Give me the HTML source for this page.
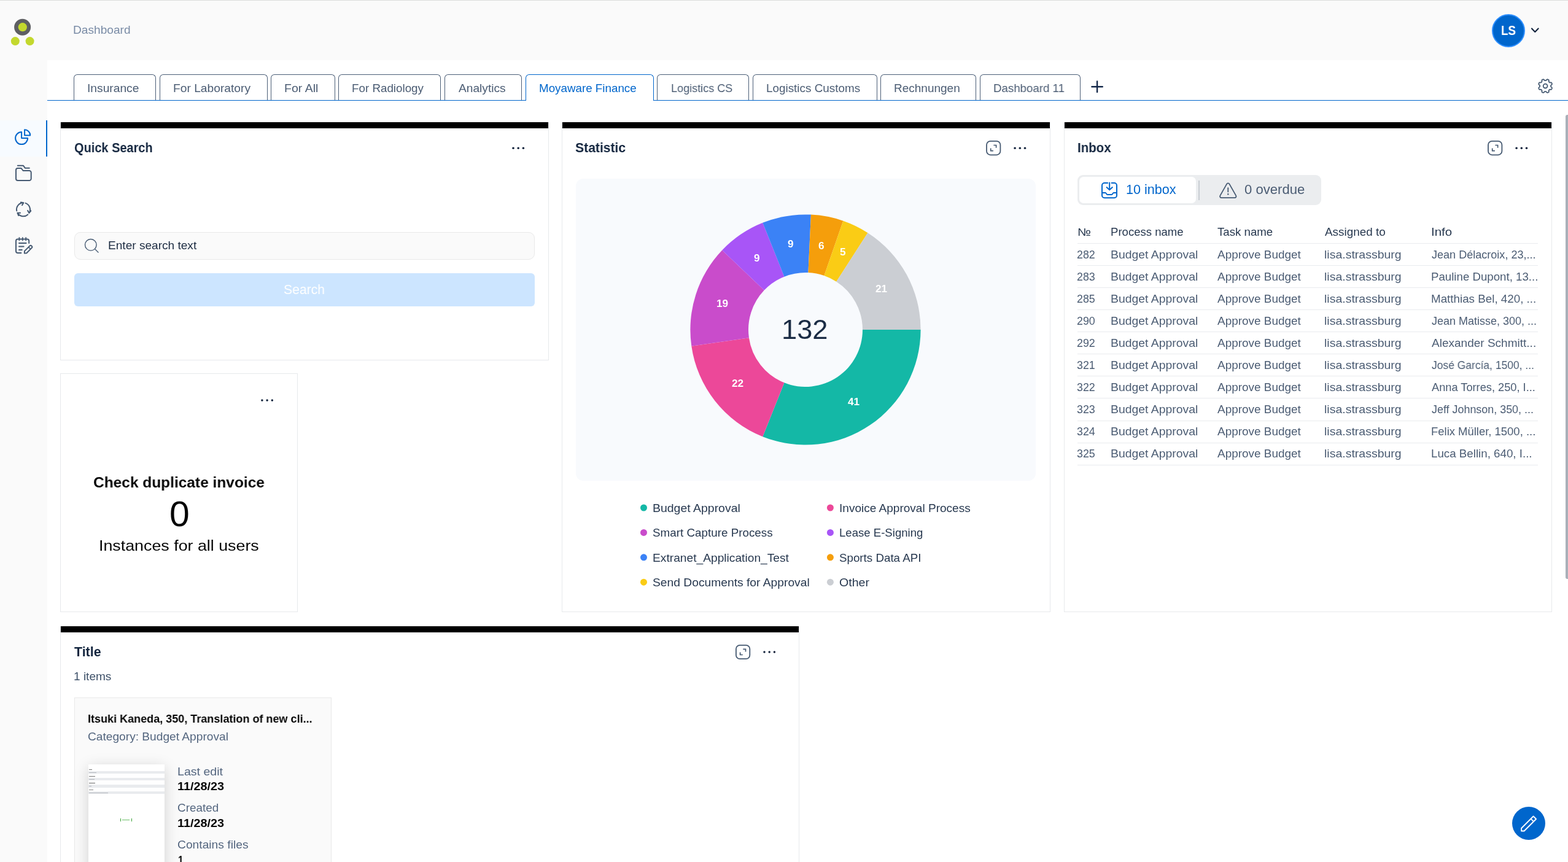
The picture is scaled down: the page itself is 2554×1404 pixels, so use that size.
<!DOCTYPE html>
<html lang="en">
<head>
<meta charset="utf-8">
<title>Dashboard</title>
<style>
*{box-sizing:border-box}
html,body{margin:0;padding:0}
body{background:#fff;font-family:"Liberation Sans",Arial,sans-serif}
.page{position:relative;width:2554px;height:1404px;overflow:hidden;background:#fff}
.a{position:absolute}
.t{position:absolute;white-space:nowrap;line-height:1;transform-origin:0 0;will-change:transform}
svg{position:absolute;overflow:visible}
</style>
</head>
<body>
<div class="page">
<div class="a" style="left:0px;top:0px;width:2554px;height:98px;background:#fafafa"></div>
<div class="a" style="left:0px;top:0px;width:77px;height:1404px;background:#fafafa"></div>
<div class="a" style="left:0px;top:0px;width:2554px;height:1px;background:#dadcda"></div>
<div class="a" style="left:0px;top:196px;width:77px;height:59px;background:#f7fbff;border-right:2px solid #0066cc"></div>
<svg style="left:14px;top:28px" width="48" height="50" viewBox="14 28 48 50" fill="none" ><circle cx="36.6" cy="44.2" r="13.5" fill="#5e5f62"/><circle cx="36.8" cy="44.2" r="7.1" fill="#c3d82e"/><circle cx="24.8" cy="67.1" r="7" fill="#c3d82e"/><circle cx="48.6" cy="67.1" r="7" fill="#c3d82e"/></svg>
<svg style="left:20px;top:205px" width="36" height="36" viewBox="20 205 36 36" fill="none" ><path d="M35.1 215.1A10 10 0 1 0 45.1 225.1H35.1Z" stroke="#0066cc" stroke-width="2" stroke-linejoin="round"/><path d="M40.1 211.3A9.1 9.1 0 0 1 49.2 220.4H40.1Z" stroke="#0066cc" stroke-width="2" stroke-linejoin="round"/></svg>
<svg style="left:20px;top:264px" width="36" height="36" viewBox="20 264 36 36" fill="none" ><path d="M29 274H34.6L37.6 278H47.7A3 3 0 0 1 50.7 281V291A3 3 0 0 1 47.7 294H29A3 3 0 0 1 26 291V277A3 3 0 0 1 29 274Z" stroke="#465a72" stroke-width="2" stroke-linejoin="round"/><path d="M28.8 269.8H38L41 273.8H47.8" stroke="#465a72" stroke-width="2" stroke-linecap="round" stroke-linejoin="round"/></svg>
<svg style="left:20px;top:323px" width="36" height="36" viewBox="20 323 36 36" fill="none" ><path d="M27.20 343.40A11 11 0 0 1 38.38 330.31M38.38 330.31L33.85 329.51M38.38 330.31L36.01 334.25M41.58 330.90A11 11 0 0 1 47.43 346.97M47.43 346.97L50.32 343.39M47.43 346.97L45.13 342.98M45.36 349.47A11 11 0 0 1 28.47 346.80M28.47 346.80L30.20 351.07M28.47 346.80L33.07 346.72" stroke="#465a72" stroke-width="2" stroke-linecap="round" stroke-linejoin="round"/></svg>
<svg style="left:20px;top:382px" width="36" height="36" viewBox="20 382 36 36" fill="none" ><path d="M47.2 396V392.4A3 3 0 0 0 44.2 389.4H29A3 3 0 0 0 26 392.4V409A3 3 0 0 0 29 412H34.4" stroke="#465a72" stroke-width="2" stroke-linecap="round" stroke-linejoin="round"/><path d="M31.4 387.3V391.3M36.8 387.3V391.3M42.2 387.3V391.3M31 395.9H42.6M31 401.4H38.6M31 406.9H35.8" stroke="#465a72" stroke-width="2" stroke-linecap="round"/><path d="M40 408.9L48.3 400.6A2.3 2.3 0 0 1 51.6 403.9L43.3 412.2L39.8 412.5Z" stroke="#465a72" stroke-width="2" stroke-linejoin="round"/><path d="M46.4 402.4L49.7 405.7" stroke="#465a72" stroke-width="1.6"/></svg>
<div class="a" style="left:2430px;top:23px;width:54px;height:54px;border-radius:50%;background:#0066cc;border:2px solid #2e8fff"></div>
<svg style="left:2490px;top:40px" width="22" height="20" viewBox="2490 40 22 20" fill="none" ><path d="M2495 46.4L2500.3 51.9L2505.6 46.4" stroke="#13233c" stroke-width="2.1" stroke-linecap="round" stroke-linejoin="round"/></svg>
<div class="a" style="left:77px;top:163px;width:2477px;height:1px;background:#0066cc"></div>
<div class="a" style="left:120px;top:121px;width:134px;height:42px;border:1px solid #4b5e77;border-bottom:0;border-radius:6px 6px 0 0"></div>
<div class="a" style="left:260px;top:121px;width:176px;height:42px;border:1px solid #4b5e77;border-bottom:0;border-radius:6px 6px 0 0"></div>
<div class="a" style="left:441px;top:121px;width:105px;height:42px;border:1px solid #4b5e77;border-bottom:0;border-radius:6px 6px 0 0"></div>
<div class="a" style="left:551px;top:121px;width:167px;height:42px;border:1px solid #4b5e77;border-bottom:0;border-radius:6px 6px 0 0"></div>
<div class="a" style="left:724px;top:121px;width:126px;height:42px;border:1px solid #4b5e77;border-bottom:0;border-radius:6px 6px 0 0"></div>
<div class="a" style="left:856px;top:121px;width:209px;height:43px;border:1px solid #0066cc;border-bottom:0;border-radius:6px 6px 0 0;background:#fff"></div>
<div class="a" style="left:1070px;top:121px;width:150px;height:42px;border:1px solid #4b5e77;border-bottom:0;border-radius:6px 6px 0 0"></div>
<div class="a" style="left:1226px;top:121px;width:203px;height:42px;border:1px solid #4b5e77;border-bottom:0;border-radius:6px 6px 0 0"></div>
<div class="a" style="left:1434px;top:121px;width:156px;height:42px;border:1px solid #4b5e77;border-bottom:0;border-radius:6px 6px 0 0"></div>
<div class="a" style="left:1596px;top:121px;width:164px;height:42px;border:1px solid #4b5e77;border-bottom:0;border-radius:6px 6px 0 0"></div>
<svg style="left:1775px;top:129px" width="24" height="24" viewBox="1775 129 24 24" fill="none" ><path d="M1778.4 141.2H1795.8M1787.1 132.5V149.9" stroke="#15294a" stroke-width="2.4" stroke-linecap="round"/></svg>
<svg style="left:2503px;top:126px" width="28" height="28" viewBox="2503 126 28 28" fill="none" ><path d="M2526.10 140.10L2526.10 140.45L2526.11 140.81L2526.18 141.17L2526.46 141.58L2527.10 142.09L2527.73 142.65L2527.93 143.16L2527.91 143.61L2527.79 144.04L2527.63 144.46L2527.45 144.87L2527.22 145.26L2526.92 145.60L2526.42 145.81L2525.58 145.77L2524.76 145.67L2524.28 145.76L2523.97 145.97L2523.71 146.21L2523.46 146.46L2523.21 146.71L2522.97 146.97L2522.76 147.28L2522.67 147.76L2522.77 148.58L2522.81 149.42L2522.60 149.92L2522.26 150.22L2521.87 150.45L2521.46 150.63L2521.04 150.79L2520.61 150.91L2520.16 150.93L2519.65 150.73L2519.09 150.10L2518.58 149.46L2518.17 149.18L2517.81 149.11L2517.45 149.10L2517.10 149.10L2516.75 149.10L2516.39 149.11L2516.03 149.18L2515.62 149.46L2515.11 150.10L2514.55 150.73L2514.04 150.93L2513.59 150.91L2513.16 150.79L2512.74 150.63L2512.33 150.45L2511.94 150.22L2511.60 149.92L2511.39 149.42L2511.43 148.58L2511.53 147.76L2511.44 147.28L2511.23 146.97L2510.99 146.71L2510.74 146.46L2510.49 146.21L2510.23 145.97L2509.92 145.76L2509.44 145.67L2508.62 145.77L2507.78 145.81L2507.28 145.60L2506.98 145.26L2506.75 144.87L2506.57 144.46L2506.41 144.04L2506.29 143.61L2506.27 143.16L2506.47 142.65L2507.10 142.09L2507.74 141.58L2508.02 141.17L2508.09 140.81L2508.10 140.45L2508.10 140.10L2508.10 139.75L2508.09 139.39L2508.02 139.03L2507.74 138.62L2507.10 138.11L2506.47 137.55L2506.27 137.04L2506.29 136.59L2506.41 136.16L2506.57 135.74L2506.75 135.33L2506.98 134.94L2507.28 134.60L2507.78 134.39L2508.62 134.43L2509.44 134.53L2509.92 134.44L2510.23 134.23L2510.49 133.99L2510.74 133.74L2510.99 133.49L2511.23 133.23L2511.44 132.92L2511.53 132.44L2511.43 131.62L2511.39 130.78L2511.60 130.28L2511.94 129.98L2512.33 129.75L2512.74 129.57L2513.16 129.41L2513.59 129.29L2514.04 129.27L2514.55 129.47L2515.11 130.10L2515.62 130.74L2516.03 131.02L2516.39 131.09L2516.75 131.10L2517.10 131.10L2517.45 131.10L2517.81 131.09L2518.17 131.02L2518.58 130.74L2519.09 130.10L2519.65 129.47L2520.16 129.27L2520.61 129.29L2521.04 129.41L2521.46 129.57L2521.87 129.75L2522.26 129.98L2522.60 130.28L2522.81 130.78L2522.77 131.62L2522.67 132.44L2522.76 132.92L2522.97 133.23L2523.21 133.49L2523.46 133.74L2523.71 133.99L2523.97 134.23L2524.28 134.44L2524.76 134.53L2525.58 134.43L2526.42 134.39L2526.92 134.60L2527.22 134.94L2527.45 135.33L2527.63 135.74L2527.79 136.16L2527.91 136.59L2527.93 137.04L2527.73 137.55L2527.10 138.11L2526.46 138.62L2526.18 139.03L2526.11 139.39L2526.10 139.75Z" stroke="#465a72" stroke-width="1.8" stroke-linejoin="round"/><circle cx="2517.1" cy="140.1" r="3.4" stroke="#465a72" stroke-width="1.8"/></svg>
<div class="a" style="left:98px;top:199px;width:796px;height:388px;border:1px solid #e7e9ec;background:#fff"></div><div class="a" style="left:99px;top:199px;width:794px;height:10px;background:#000"></div>
<div class="a" style="left:98px;top:608px;width:387px;height:389px;border:1px solid #e7e9ec;background:#fff"></div>
<div class="a" style="left:915px;top:199px;width:796px;height:798px;border:1px solid #e7e9ec;background:#fff"></div><div class="a" style="left:916px;top:199px;width:794px;height:10px;background:#000"></div>
<div class="a" style="left:1733px;top:199px;width:795px;height:798px;border:1px solid #e7e9ec;background:#fff"></div><div class="a" style="left:1734px;top:199px;width:793px;height:10px;background:#000"></div>
<div class="a" style="left:98px;top:1020px;width:1204px;height:400px;border:1px solid #e7e9ec;background:#fff"></div><div class="a" style="left:99px;top:1020px;width:1202px;height:10px;background:#000"></div>
<div class="a" style="left:121px;top:378px;width:750px;height:45px;border:1px solid #e9e9e9;border-radius:10px;background:#fafafa"></div>
<svg style="left:134px;top:385px" width="30" height="30" viewBox="134 385 30 30" fill="none" ><circle cx="147.8" cy="398.8" r="9.3" stroke="#465a72" stroke-width="1.4"/><path d="M154.5 405.5L160 411" stroke="#465a72" stroke-width="1.4" stroke-linecap="round"/></svg>
<div class="a" style="left:121px;top:445px;width:750px;height:54px;border-radius:6px;background:#cce5ff"></div>
<svg style="left:826px;top:231px" width="36" height="20" viewBox="826 231 36 20" fill="none" ><circle cx="836.0" cy="241.2" r="1.75" fill="#13233c"/><circle cx="844.2" cy="241.2" r="1.75" fill="#13233c"/><circle cx="852.4" cy="241.2" r="1.75" fill="#13233c"/></svg>
<svg style="left:417px;top:642px" width="36" height="20" viewBox="417 642 36 20" fill="none" ><circle cx="426.9" cy="652.0" r="1.75" fill="#13233c"/><circle cx="435.1" cy="652.0" r="1.75" fill="#13233c"/><circle cx="443.3" cy="652.0" r="1.75" fill="#13233c"/></svg>
<svg style="left:1600px;top:225px" width="80" height="32" viewBox="1600 225 80 32" fill="none" ><rect x="1607.0" y="229.9" width="22.4" height="22.4" rx="6.2" stroke="#465a72" stroke-width="1.8"/><path d="M1618.4 236.5h4.2v4.2M1613.7 241.5v4.1h4.2" stroke="#465a72" stroke-width="1.7"/><circle cx="1653.1" cy="241.2" r="1.75" fill="#13233c"/><circle cx="1661.3" cy="241.2" r="1.75" fill="#13233c"/><circle cx="1669.5" cy="241.2" r="1.75" fill="#13233c"/></svg>
<svg style="left:2417px;top:225px" width="80" height="32" viewBox="2417 225 80 32" fill="none" ><rect x="2424.0" y="229.9" width="22.4" height="22.4" rx="6.2" stroke="#465a72" stroke-width="1.8"/><path d="M2435.4 236.5h4.2v4.2M2430.7 241.5v4.1h4.2" stroke="#465a72" stroke-width="1.7"/><circle cx="2470.1" cy="241.2" r="1.75" fill="#13233c"/><circle cx="2478.3" cy="241.2" r="1.75" fill="#13233c"/><circle cx="2486.5" cy="241.2" r="1.75" fill="#13233c"/></svg>
<svg style="left:1192px;top:1046px" width="80" height="32" viewBox="1192 1046 80 32" fill="none" ><rect x="1198.9" y="1050.8" width="22.4" height="22.4" rx="6.2" stroke="#465a72" stroke-width="1.8"/><path d="M1210.3 1057.4h4.2v4.2M1205.6 1062.4v4.1h4.2" stroke="#465a72" stroke-width="1.7"/><circle cx="1245.0" cy="1062.1" r="1.75" fill="#13233c"/><circle cx="1253.2" cy="1062.1" r="1.75" fill="#13233c"/><circle cx="1261.4" cy="1062.1" r="1.75" fill="#13233c"/></svg>
<div class="a" style="left:938px;top:291px;width:749px;height:492px;border-radius:12px;background:#f8fafd"></div>
<svg style="left:1112px;top:337px" width="400" height="400" viewBox="1112 337 400 400" fill="none" ><path fill="#14b8a6" d="M1499.60 537.00A187.6 187.6 0 0 1 1242.28 711.16L1277.44 623.34A93 93 0 0 0 1405.00 537.00Z"/><path fill="#ec4899" d="M1242.28 711.16A187.6 187.6 0 0 1 1126.31 563.70L1219.95 550.24A93 93 0 0 0 1277.44 623.34Z"/><path fill="#c94ccb" d="M1126.31 563.70A187.6 187.6 0 0 1 1176.23 407.54L1244.69 472.82A93 93 0 0 0 1219.95 550.24Z"/><path fill="#a855f7" d="M1176.23 407.54A187.6 187.6 0 0 1 1242.28 362.84L1277.44 450.66A93 93 0 0 0 1244.69 472.82Z"/><path fill="#3b82f6" d="M1242.28 362.84A187.6 187.6 0 0 1 1320.93 349.61L1316.43 444.11A93 93 0 0 0 1277.44 450.66Z"/><path fill="#f59e0b" d="M1320.93 349.61A187.6 187.6 0 0 1 1373.36 359.72L1342.42 449.11A93 93 0 0 0 1316.43 444.11Z"/><path fill="#facc15" d="M1373.36 359.72A187.6 187.6 0 0 1 1413.42 379.18L1362.28 458.76A93 93 0 0 0 1342.42 449.11Z"/><path fill="#cbced3" d="M1413.42 379.18A187.6 187.6 0 0 1 1499.60 537.00L1405.00 537.00A93 93 0 0 0 1362.28 458.76Z"/></svg>
<svg style="left:1040px;top:815px" width="320" height="145" viewBox="1040 815 320 145" fill="none" ><circle cx="1048.5" cy="827" r="5.5" fill="#14b8a6"/><circle cx="1352.4" cy="827" r="5.5" fill="#ec4899"/><circle cx="1048.5" cy="867.4" r="5.5" fill="#c94ccb"/><circle cx="1352.4" cy="867.4" r="5.5" fill="#a855f7"/><circle cx="1048.5" cy="907.8" r="5.5" fill="#3b82f6"/><circle cx="1352.4" cy="907.8" r="5.5" fill="#f59e0b"/><circle cx="1048.5" cy="948.2" r="5.5" fill="#facc15"/><circle cx="1352.4" cy="948.2" r="5.5" fill="#cbced3"/></svg>
<div class="a" style="left:1755px;top:285px;width:397px;height:49px;border-radius:9px;background:#ebedef"></div>
<div class="a" style="left:1758px;top:288px;width:190px;height:43px;border-radius:7px;background:#fff"></div>
<div class="a" style="left:1952px;top:294px;width:2px;height:32px;background:#c9cdd3"></div>
<svg style="left:1790px;top:294px" width="34" height="34" viewBox="1790 294 34 34" fill="none" ><path d="M1804.2 298H1799A4 4 0 0 0 1795 302V318.3A4 4 0 0 0 1799 322.3H1815A4 4 0 0 0 1819 318.3V302A4 4 0 0 0 1815 298H1810.6" stroke="#0066cc" stroke-width="2" stroke-linecap="round"/><path d="M1807.2 297.4V309M1802.6 305L1807.2 309.4L1811.8 305" stroke="#0066cc" stroke-width="2" stroke-linecap="round" stroke-linejoin="round"/><path d="M1795 314H1800.6C1801.8 314 1802 316.9 1804 316.9H1810.4C1812.4 316.9 1812.6 314 1813.8 314H1819" stroke="#0066cc" stroke-width="2" stroke-linejoin="round"/></svg>
<svg style="left:1983px;top:294px" width="36" height="34" viewBox="1983 294 36 34" fill="none" ><path d="M1998.2 299.6A2.4 2.4 0 0 1 2002.4 299.6L2013.2 318.6A2.4 2.4 0 0 1 2011.1 322.2H1989.5A2.4 2.4 0 0 1 1987.4 318.6Z" stroke="#465a72" stroke-width="1.8" stroke-linejoin="round"/><path d="M2000.3 306.2V312.4" stroke="#465a72" stroke-width="1.8" stroke-linecap="round"/><circle cx="2000.3" cy="316.3" r="1.2" fill="#465a72"/></svg>
<div class="a" style="left:1755px;top:396px;width:750px;height:1px;background:#e9ebee"></div>
<div class="a" style="left:1755px;top:432px;width:750px;height:1px;background:#e9ebee"></div>
<div class="a" style="left:1755px;top:468px;width:750px;height:1px;background:#e9ebee"></div>
<div class="a" style="left:1755px;top:504px;width:750px;height:1px;background:#e9ebee"></div>
<div class="a" style="left:1755px;top:540px;width:750px;height:1px;background:#e9ebee"></div>
<div class="a" style="left:1755px;top:576px;width:750px;height:1px;background:#e9ebee"></div>
<div class="a" style="left:1755px;top:612px;width:750px;height:1px;background:#e9ebee"></div>
<div class="a" style="left:1755px;top:648px;width:750px;height:1px;background:#e9ebee"></div>
<div class="a" style="left:1755px;top:685px;width:750px;height:1px;background:#e9ebee"></div>
<div class="a" style="left:1755px;top:721px;width:750px;height:1px;background:#e9ebee"></div>
<div class="a" style="left:1755px;top:757px;width:750px;height:1px;background:#e9ebee"></div>
<div class="a" style="left:121px;top:1136px;width:419px;height:300px;border:1px solid #e9e9e9;background:#fafafa"></div>
<div class="a" style="left:144px;top:1245px;width:124px;height:175px;background:#fff;box-shadow:0 5px 22px rgba(0,0,0,.17)"><div class="a" style="left:0;top:10.5px;width:124px;height:4.6px;background:#e9ebee"></div><div class="a" style="left:0;top:21.8px;width:124px;height:4.6px;background:#e9ebee"></div><div class="a" style="left:0;top:33px;width:124px;height:4.6px;background:#e9ebee"></div><div class="a" style="left:0;top:43.8px;width:124px;height:4.6px;background:#e9ebee"></div><div class="a" style="left:1px;top:7.6px;width:5px;height:1px;background:#777"></div><div class="a" style="left:1px;top:12.6px;width:12px;height:1px;background:#b3b7bd"></div><div class="a" style="left:1px;top:18.8px;width:10px;height:1px;background:#777"></div><div class="a" style="left:1px;top:23.8px;width:9px;height:1px;background:#b3b7bd"></div><div class="a" style="left:1px;top:29.9px;width:10px;height:1px;background:#666"></div><div class="a" style="left:1px;top:35px;width:4px;height:1px;background:#b3b7bd"></div><div class="a" style="left:1px;top:41px;width:7px;height:1px;background:#888"></div><div class="a" style="left:1px;top:45.8px;width:31px;height:1px;background:#b3b7bd"></div><div class="a" style="left:52px;top:88px;width:19px;height:5px;border-left:1px solid #3aa335;border-right:1px solid #3aa335"></div><div class="a" style="left:55px;top:89.5px;width:12px;height:1px;background:#6cbf68"></div></div>
<div class="a" style="left:2550px;top:187px;width:6px;height:756px;border-radius:3px;background:#a9b0b9"></div>
<div class="a" style="left:2463px;top:1314px;width:54px;height:54px;border-radius:50%;background:#0066cc"></div>
<svg style="left:2470px;top:1322px" width="40" height="40" viewBox="2470 1322 40 40" fill="none" ><path d="M2497.6 1329.5L2502.1 1334L2482.6 1353.5H2478.1V1349Z" stroke="#fff" stroke-width="1.8" stroke-linejoin="round"/><path d="M2493.5 1333.6L2498 1338.1" stroke="#fff" stroke-width="1.8"/></svg>
<!-- text -->
<div class="t" style="left:119.4px;top:40px;font-size:18.0px;color:#7a8ca6;transform:scaleX(1.062)">Dashboard</div>
<div class="t" style="left:2444.7px;top:40px;font-size:21.4px;color:#ffffff;font-weight:700;transform:scaleX(0.877)">LS</div>
<div class="t" style="left:142.4px;top:135px;font-size:18.8px;color:#4b5c73;transform:scaleX(1.023)">Insurance</div>
<div class="t" style="left:282.2px;top:135px;font-size:18.8px;color:#4b5c73;transform:scaleX(1.023)">For Laboratory</div>
<div class="t" style="left:463.4px;top:135px;font-size:18.8px;color:#4b5c73;transform:scaleX(1.041)">For All</div>
<div class="t" style="left:573.0px;top:135px;font-size:18.8px;color:#4b5c73">For Radiology</div>
<div class="t" style="left:746.5px;top:135px;font-size:18.8px;color:#4b5c73;transform:scaleX(1.020)">Analytics</div>
<div class="t" style="left:878.3px;top:135px;font-size:18.8px;color:#0066cc">Moyaware Finance</div>
<div class="t" style="left:1092.6px;top:135px;font-size:18.8px;color:#4b5c73;transform:scaleX(0.961)">Logistics CS</div>
<div class="t" style="left:1248.0px;top:135px;font-size:18.8px;color:#4b5c73;transform:scaleX(1.005)">Logistics Customs</div>
<div class="t" style="left:1456.4px;top:135px;font-size:18.8px;color:#4b5c73;transform:scaleX(1.011)">Rechnungen</div>
<div class="t" style="left:1617.8px;top:135px;font-size:18.8px;color:#4b5c73;transform:scaleX(0.994)">Dashboard 11</div>
<div class="t" style="left:120.7px;top:231px;font-size:21.4px;color:#14263f;font-weight:700;transform:scaleX(0.933)">Quick Search</div>
<div class="t" style="left:937.3px;top:231px;font-size:21.4px;color:#14263f;font-weight:700;transform:scaleX(0.987)">Statistic</div>
<div class="t" style="left:1755.0px;top:231px;font-size:21.4px;color:#14263f;font-weight:700;transform:scaleX(0.957)">Inbox</div>
<div class="t" style="left:121.3px;top:1052px;font-size:21.4px;color:#14263f;font-weight:700">Title</div>
<div class="t" style="left:175.7px;top:391px;font-size:18.6px;color:#1c2b41;transform:scaleX(1.026)">Enter search text</div>
<div class="t" style="left:462.0px;top:461px;font-size:22.0px;color:#ffffff;transform:scaleX(0.960)">Search</div>
<div class="t" style="left:152.0px;top:774px;font-size:24.8px;color:#060606;font-weight:700;transform:scaleX(0.987)">Check duplicate invoice</div>
<div class="t" style="left:275.6px;top:810px;font-size:56.5px;color:#060606;transform:scaleX(1.041)">0</div>
<div class="t" style="left:161.2px;top:877px;font-size:24.4px;color:#060606;transform:scaleX(1.099)">Instances for all users</div>
<div class="t" style="left:1273.4px;top:515px;font-size:44px;color:#1a2b44;transform:scaleX(1.029)">132</div>
<div class="t" style="left:1380.8px;top:646px;font-size:17.2px;color:#ffffff;font-weight:700">41</div>
<div class="t" style="left:1191.9px;top:616px;font-size:17.2px;color:#ffffff;font-weight:700">22</div>
<div class="t" style="left:1166.8px;top:486px;font-size:17.2px;color:#ffffff;font-weight:700">19</div>
<div class="t" style="left:1227.5px;top:412px;font-size:17.2px;color:#ffffff;font-weight:700">9</div>
<div class="t" style="left:1282.5px;top:389px;font-size:17.2px;color:#ffffff;font-weight:700">9</div>
<div class="t" style="left:1333.1px;top:392px;font-size:17.2px;color:#ffffff;font-weight:700">6</div>
<div class="t" style="left:1367.5px;top:402px;font-size:17.2px;color:#ffffff;font-weight:700">5</div>
<div class="t" style="left:1426.4px;top:462px;font-size:17.2px;color:#ffffff;font-weight:700">21</div>
<div class="t" style="left:1063.1px;top:820px;font-size:17.6px;color:#27384f;transform:scaleX(1.106)">Budget Approval</div>
<div class="t" style="left:1063.1px;top:860px;font-size:17.6px;color:#27384f;transform:scaleX(1.070)">Smart Capture Process</div>
<div class="t" style="left:1063.1px;top:901px;font-size:17.6px;color:#27384f;transform:scaleX(1.091)">Extranet_Application_Test</div>
<div class="t" style="left:1063.1px;top:941px;font-size:17.6px;color:#27384f;transform:scaleX(1.094)">Send Documents for Approval</div>
<div class="t" style="left:1366.8px;top:820px;font-size:17.6px;color:#27384f;transform:scaleX(1.082)">Invoice Approval Process</div>
<div class="t" style="left:1366.8px;top:860px;font-size:17.6px;color:#27384f;transform:scaleX(1.056)">Lease E-Signing</div>
<div class="t" style="left:1366.8px;top:901px;font-size:17.6px;color:#27384f;transform:scaleX(1.066)">Sports Data API</div>
<div class="t" style="left:1366.8px;top:941px;font-size:17.6px;color:#27384f;transform:scaleX(1.114)">Other</div>
<div class="t" style="left:1834.0px;top:298px;font-size:21.6px;color:#0066cc">10 inbox</div>
<div class="t" style="left:2026.7px;top:298px;font-size:21.6px;color:#4b5c73;transform:scaleX(1.024)">0 overdue</div>
<div class="t" style="left:1754.5px;top:370px;font-size:17.6px;color:#27384f;transform:scaleX(1.165)">№</div>
<div class="t" style="left:1809.1px;top:370px;font-size:17.6px;color:#27384f;transform:scaleX(1.055)">Process name</div>
<div class="t" style="left:1983.4px;top:370px;font-size:17.6px;color:#27384f;transform:scaleX(1.060)">Task name</div>
<div class="t" style="left:2157.6px;top:370px;font-size:17.6px;color:#27384f;transform:scaleX(1.075)">Assigned to</div>
<div class="t" style="left:2330.6px;top:370px;font-size:17.6px;color:#27384f;transform:scaleX(1.164)">Info</div>
<div class="t" style="left:1754.2px;top:407px;font-size:17.6px;color:#4b5c73;transform:scaleX(1.014)">282</div>
<div class="t" style="left:1809.1px;top:407px;font-size:17.6px;color:#4b5c73;transform:scaleX(1.103)">Budget Approval</div>
<div class="t" style="left:1983.4px;top:407px;font-size:17.6px;color:#4b5c73;transform:scaleX(1.076)">Approve Budget</div>
<div class="t" style="left:2156.5px;top:407px;font-size:17.6px;color:#4b5c73;transform:scaleX(1.108)">lisa.strassburg</div>
<div class="t" style="left:2331.8px;top:407px;font-size:17.6px;color:#4b5c73;transform:scaleX(1.026)">Jean Délacroix, 23,...</div>
<div class="t" style="left:1754.2px;top:443px;font-size:17.6px;color:#4b5c73;transform:scaleX(1.014)">283</div>
<div class="t" style="left:1809.1px;top:443px;font-size:17.6px;color:#4b5c73;transform:scaleX(1.103)">Budget Approval</div>
<div class="t" style="left:1983.4px;top:443px;font-size:17.6px;color:#4b5c73;transform:scaleX(1.076)">Approve Budget</div>
<div class="t" style="left:2156.5px;top:443px;font-size:17.6px;color:#4b5c73;transform:scaleX(1.108)">lisa.strassburg</div>
<div class="t" style="left:2330.7px;top:443px;font-size:17.6px;color:#4b5c73;transform:scaleX(1.061)">Pauline Dupont, 13...</div>
<div class="t" style="left:1754.2px;top:479px;font-size:17.6px;color:#4b5c73;transform:scaleX(1.014)">285</div>
<div class="t" style="left:1809.1px;top:479px;font-size:17.6px;color:#4b5c73;transform:scaleX(1.103)">Budget Approval</div>
<div class="t" style="left:1983.4px;top:479px;font-size:17.6px;color:#4b5c73;transform:scaleX(1.076)">Approve Budget</div>
<div class="t" style="left:2156.5px;top:479px;font-size:17.6px;color:#4b5c73;transform:scaleX(1.108)">lisa.strassburg</div>
<div class="t" style="left:2330.7px;top:479px;font-size:17.6px;color:#4b5c73;transform:scaleX(1.068)">Matthias Bel, 420, ...</div>
<div class="t" style="left:1754.2px;top:515px;font-size:17.6px;color:#4b5c73;transform:scaleX(1.014)">290</div>
<div class="t" style="left:1809.1px;top:515px;font-size:17.6px;color:#4b5c73;transform:scaleX(1.103)">Budget Approval</div>
<div class="t" style="left:1983.4px;top:515px;font-size:17.6px;color:#4b5c73;transform:scaleX(1.076)">Approve Budget</div>
<div class="t" style="left:2156.5px;top:515px;font-size:17.6px;color:#4b5c73;transform:scaleX(1.108)">lisa.strassburg</div>
<div class="t" style="left:2331.8px;top:515px;font-size:17.6px;color:#4b5c73;transform:scaleX(1.023)">Jean Matisse, 300, ...</div>
<div class="t" style="left:1754.2px;top:551px;font-size:17.6px;color:#4b5c73;transform:scaleX(1.014)">292</div>
<div class="t" style="left:1809.1px;top:551px;font-size:17.6px;color:#4b5c73;transform:scaleX(1.103)">Budget Approval</div>
<div class="t" style="left:1983.4px;top:551px;font-size:17.6px;color:#4b5c73;transform:scaleX(1.076)">Approve Budget</div>
<div class="t" style="left:2156.5px;top:551px;font-size:17.6px;color:#4b5c73;transform:scaleX(1.108)">lisa.strassburg</div>
<div class="t" style="left:2331.8px;top:551px;font-size:17.6px;color:#4b5c73;transform:scaleX(1.081)">Alexander Schmitt...</div>
<div class="t" style="left:1754.2px;top:587px;font-size:17.6px;color:#4b5c73;transform:scaleX(1.014)">321</div>
<div class="t" style="left:1809.1px;top:587px;font-size:17.6px;color:#4b5c73;transform:scaleX(1.103)">Budget Approval</div>
<div class="t" style="left:1983.4px;top:587px;font-size:17.6px;color:#4b5c73;transform:scaleX(1.076)">Approve Budget</div>
<div class="t" style="left:2156.5px;top:587px;font-size:17.6px;color:#4b5c73;transform:scaleX(1.108)">lisa.strassburg</div>
<div class="t" style="left:2331.8px;top:587px;font-size:17.6px;color:#4b5c73;transform:scaleX(0.992)">José García, 1500, ...</div>
<div class="t" style="left:1754.2px;top:623px;font-size:17.6px;color:#4b5c73;transform:scaleX(1.014)">322</div>
<div class="t" style="left:1809.1px;top:623px;font-size:17.6px;color:#4b5c73;transform:scaleX(1.103)">Budget Approval</div>
<div class="t" style="left:1983.4px;top:623px;font-size:17.6px;color:#4b5c73;transform:scaleX(1.076)">Approve Budget</div>
<div class="t" style="left:2156.5px;top:623px;font-size:17.6px;color:#4b5c73;transform:scaleX(1.108)">lisa.strassburg</div>
<div class="t" style="left:2331.8px;top:623px;font-size:17.6px;color:#4b5c73;transform:scaleX(1.036)">Anna Torres, 250, I...</div>
<div class="t" style="left:1754.2px;top:659px;font-size:17.6px;color:#4b5c73;transform:scaleX(1.014)">323</div>
<div class="t" style="left:1809.1px;top:659px;font-size:17.6px;color:#4b5c73;transform:scaleX(1.103)">Budget Approval</div>
<div class="t" style="left:1983.4px;top:659px;font-size:17.6px;color:#4b5c73;transform:scaleX(1.076)">Approve Budget</div>
<div class="t" style="left:2156.5px;top:659px;font-size:17.6px;color:#4b5c73;transform:scaleX(1.108)">lisa.strassburg</div>
<div class="t" style="left:2331.8px;top:659px;font-size:17.6px;color:#4b5c73;transform:scaleX(1.018)">Jeff Johnson, 350, ...</div>
<div class="t" style="left:1754.2px;top:695px;font-size:17.6px;color:#4b5c73;transform:scaleX(1.014)">324</div>
<div class="t" style="left:1809.1px;top:695px;font-size:17.6px;color:#4b5c73;transform:scaleX(1.103)">Budget Approval</div>
<div class="t" style="left:1983.4px;top:695px;font-size:17.6px;color:#4b5c73;transform:scaleX(1.076)">Approve Budget</div>
<div class="t" style="left:2156.5px;top:695px;font-size:17.6px;color:#4b5c73;transform:scaleX(1.108)">lisa.strassburg</div>
<div class="t" style="left:2330.8px;top:695px;font-size:17.6px;color:#4b5c73;transform:scaleX(1.049)">Felix Müller, 1500, ...</div>
<div class="t" style="left:1754.2px;top:731px;font-size:17.6px;color:#4b5c73;transform:scaleX(1.014)">325</div>
<div class="t" style="left:1809.1px;top:731px;font-size:17.6px;color:#4b5c73;transform:scaleX(1.103)">Budget Approval</div>
<div class="t" style="left:1983.4px;top:731px;font-size:17.6px;color:#4b5c73;transform:scaleX(1.076)">Approve Budget</div>
<div class="t" style="left:2156.5px;top:731px;font-size:17.6px;color:#4b5c73;transform:scaleX(1.108)">lisa.strassburg</div>
<div class="t" style="left:2330.7px;top:731px;font-size:17.6px;color:#4b5c73;transform:scaleX(1.065)">Luca Bellin, 640, I...</div>
<div class="t" style="left:120.3px;top:1093px;font-size:18.2px;color:#3d5068;transform:scaleX(1.047)">1 items</div>
<div class="t" style="left:142.9px;top:1162px;font-size:18.2px;color:#060606;font-weight:700;transform:scaleX(0.991)">Itsuki Kaneda, 350, Translation of new cli...</div>
<div class="t" style="left:142.8px;top:1191px;font-size:18.2px;color:#54667f;transform:scaleX(1.053)">Category: Budget Approval</div>
<div class="t" style="left:288.9px;top:1248px;font-size:18.2px;color:#54667f;transform:scaleX(1.076)">Last edit</div>
<div class="t" style="left:288.9px;top:1272px;font-size:18.2px;color:#060606;font-weight:700;transform:scaleX(1.091)">11/28/23</div>
<div class="t" style="left:289.0px;top:1307px;font-size:18.2px;color:#54667f;transform:scaleX(1.038)">Created</div>
<div class="t" style="left:288.9px;top:1332px;font-size:18.2px;color:#060606;font-weight:700;transform:scaleX(1.091)">11/28/23</div>
<div class="t" style="left:288.9px;top:1367px;font-size:18.2px;color:#54667f;transform:scaleX(1.058)">Contains files</div>
<div class="t" style="left:289.8px;top:1392px;font-size:18.2px;color:#060606;font-weight:700;transform:scaleX(0.844)">1</div>
</div>
</body>
</html>
